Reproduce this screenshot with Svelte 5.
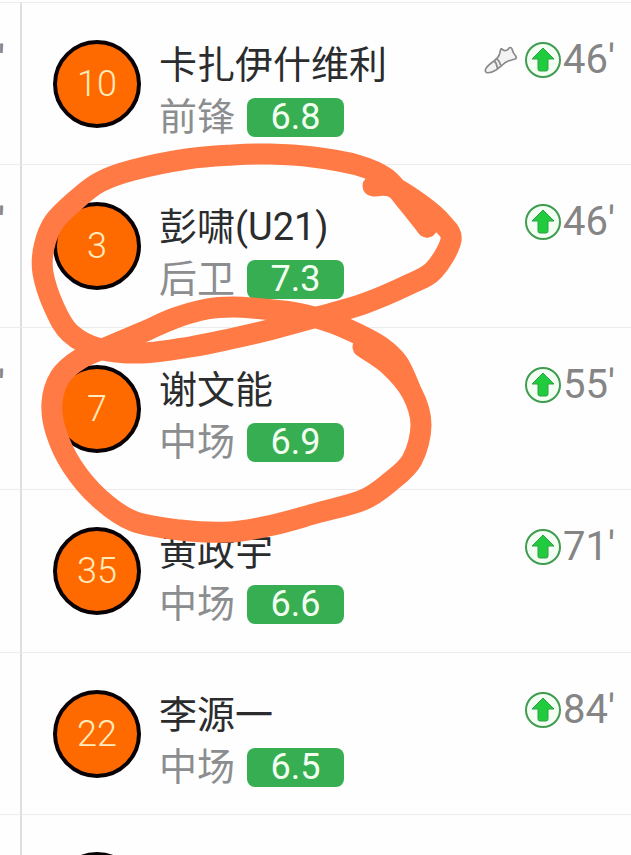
<script>
	const players = [
		{ number: 10, name: '卡扎伊什维利', position: '前锋', rating: '6.8', minute: 46, assist: true, other: true },
		{ number: 3, name: '彭啸(U21)', position: '后卫', rating: '7.3', minute: 46, other: true },
		{ number: 7, name: '谢文能', position: '中场', rating: '6.9', minute: 55, other: true },
		{ number: 35, name: '黄政宇', position: '中场', rating: '6.6', minute: 71 },
		{ number: 22, name: '李源一', position: '中场', rating: '6.5', minute: 84 },
		{}
	];

	// Points the marker went through, joined by a smooth curve
	const strokes = [
		[[373, 186], [393, 187], [423, 206], [442, 223], [451, 240], [434, 270], [410, 284], [363, 304], [317, 317], [273, 329], [230, 339], [190, 347], [143, 353], [100, 349], [70, 333], [54, 307], [43, 273], [44, 247], [54, 222], [76, 200], [100, 182], [133, 170], [187, 159], [233, 155], [270, 154], [313, 157], [357, 165], [386, 178], [408, 203], [427, 227]],
		[[393, 187], [423, 208], [427, 227]],
		[[363, 347], [390, 366], [412, 393], [421, 425], [412, 460], [390, 482], [363, 500], [317, 513], [273, 525], [230, 532], [180, 530], [133, 521], [99, 498], [72, 466], [56, 432], [52, 403], [60, 377], [80, 359], [110, 346], [143, 332], [175, 318], [207, 309], [233, 307], [263, 309], [297, 313], [330, 322], [358, 334], [380, 346], [398, 363], [412, 393]]
	];

	function curve(points) {
		let d = `M${points[0]}`;
		for (let i = 0; i < points.length - 1; i++) {
			const p0 = points[i - 1] ?? points[i];
			const p1 = points[i];
			const p2 = points[i + 1];
			const p3 = points[i + 2] ?? p2;
			const c1 = [p1[0] + (p2[0] - p0[0]) / 6, p1[1] + (p2[1] - p0[1]) / 6];
			const c2 = [p2[0] - (p3[0] - p1[0]) / 6, p2[1] - (p3[1] - p1[1]) / 6];
			d += ` C${c1} ${c2} ${p2}`;
		}
		return d;
	}
</script>

<div class="lineup">
	<div class="edge"></div>

	{#each players as player}
		<div class="row">
			<!-- Home team column, scrolled almost out of view -->
			<div class="home">{player.other ? "'" : ''}</div>

			<div class="player">
				<div class="shirt">{player.number ?? ''}</div>

				{#if player.name}
					<div class="info">
						<div class="name">{player.name}</div>
						<div class="meta">
							<span>{player.position}</span>
							<span class="rating">{player.rating}</span>
						</div>
					</div>

					<div class="events">
						{#if player.assist}
							<svg class="boot" viewBox="0 0 102 84">
								<path d="M50 10 Q52 7 56 11 Q61 16 68 13 Q74 9 76 5 Q82 3 84 9 Q87 22 96 31 Q99 36 93 39 L73 45 Q64 48 55 57 L36 72 Q20 82 8 80 Q1 75 6 67 Q12 57 30 45 Q44 34 47 23 Z" />
								<path d="M31 45 Q38 51 40 66 M39 39 Q48 46 50 58" />
							</svg>
						{/if}
						<svg class="sub" viewBox="0 0 36 36">
							<circle cx="18" cy="18" r="17" />
							<path d="M18 6 L29 17 H23 V27 Q23 29 21 29 H15 Q13 29 13 27 V17 H7 Z" />
						</svg>
						<span>{player.minute}'</span>
					</div>
				{/if}
			</div>
		</div>
	{/each}

	<!-- Marker strokes drawn over the list -->
	<svg class="marker" width="631" height="855" viewBox="0 0 631 855">
		{#each strokes as points}
			<path d={curve(points)} />
		{/each}
	</svg>
</div>

<style>
	:global(body) {
		background: #fefefe;
	}
	.lineup {
		position: relative;
		height: 100vh;
		overflow: hidden;
		font-family: Roboto, "Noto Sans CJK SC", sans-serif;
	}
	.edge {
		height: 2px;
		border-bottom: 1px solid #ebebeb;
	}
	.row {
		display: flex;
		box-sizing: border-box;
		height: 162px;
		border-bottom: 1px solid #ebebeb;
	}
	.row:nth-child(odd) {
		height: 163px;
	}
	.home {
		display: flex;
		justify-content: flex-end;
		box-sizing: border-box;
		width: 22px;
		padding-top: 32px;
		padding-right: 15px;
		border-right: 2px solid #dedede;
		color: #858585;
		font-size: 40px;
		line-height: 52px;
	}
	.player {
		display: flex;
		flex: 1;
		align-items: flex-start;
		padding: 0 16px 0 31px;
	}
	.shirt {
		display: flex;
		align-items: center;
		justify-content: center;
		box-sizing: border-box;
		width: 88px;
		height: 88px;
		margin-top: 37px;
		border: 4px solid #080206;
		border-radius: 50%;
		background: #ff6a00;
		color: #ffebbc;
		font-size: 36px;
		font-weight: 300;
	}
	.info {
		flex: 1;
		padding-top: 36px;
		padding-left: 18px;
		font-size: 38px;
		line-height: 52px;
		white-space: nowrap;
	}
	.name {
		color: #2b2c2e;
	}
	.meta {
		display: flex;
		align-items: center;
		gap: 12px;
		color: #8b8d8f;
	}
	.rating {
		width: 97px;
		height: 39px;
		border-radius: 8px;
		background: #38ae53;
		color: #f2fff0;
		font-size: 36px;
		line-height: 39px;
		text-align: center;
	}
	.events {
		display: flex;
		align-items: center;
		padding-top: 31px;
		color: #858585;
		font-size: 40px;
		line-height: 52px;
	}
	.boot {
		width: 34px;
		height: 28px;
		margin-right: 7px;
		fill: #f3f3f3;
		stroke: #8a8a8a;
		stroke-width: 5;
		stroke-linejoin: round;
	}
	.sub {
		width: 36px;
		height: 36px;
		margin-right: 2px;
	}
	.sub circle {
		fill: #f3fff2;
		stroke: #3f9c50;
		stroke-width: 2;
	}
	.sub path {
		fill: #20cb3d;
		stroke: #2fa045;
		stroke-width: 1;
		stroke-linejoin: round;
	}
	.marker {
		position: absolute;
		top: 0;
		left: 0;
		fill: none;
		stroke: #ff7a45;
		stroke-width: 21;
		stroke-linecap: round;
		stroke-linejoin: round;
		pointer-events: none;
	}
</style>
